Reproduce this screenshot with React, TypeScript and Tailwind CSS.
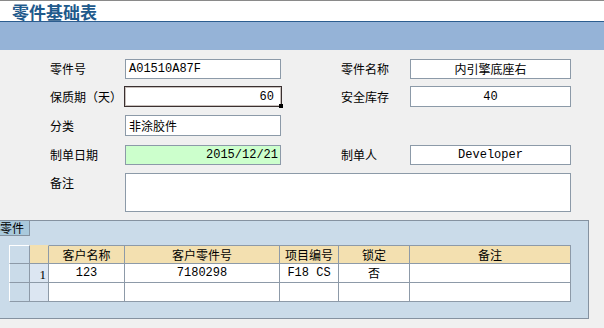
const cjk = "font-['Noto_Sans_CJK_SC','Noto_Sans',sans-serif]";
const mono = "font-['Liberation_Mono','Noto_Sans_CJK_SC',monospace]";

function Field({
  value,
  width,
  align = "left",
  mono: isMono = false,
  className = "",
}: {
  value: string;
  width: string;
  align?: "left" | "right" | "center";
  mono?: boolean;
  className?: string;
}) {
  const alignClass =
    align === "right" ? "justify-end pr-[7px]" : align === "center" ? "justify-center" : "justify-start pl-[3px]";
  return (
    <div
      className={`${width} h-full flex items-center border border-[#8c9aa8] bg-white text-[12px] text-black ${alignClass} ${
        isMono ? mono : cjk
      } ${className}`}
    >
      {value}
    </div>
  );
}

function Label({ text, width }: { text: string; width: string }) {
  return <div className={`${width} h-full flex items-center text-[12px] text-black ${cjk}`}>{text}</div>;
}

const cols = ["客户名称", "客户零件号", "项目编号", "锁定", "备注"];

export default function App() {
  return (
    <div className={`w-[604px] h-[328px] overflow-hidden bg-[#f0f0f0] flex flex-col ${cjk}`}>
      {/* title */}
      <div className="h-px bg-[#8a8a8a]" />
      <div className="h-[20px] bg-white pl-[12px] flex items-center">
        <span className="text-[17px] leading-[17px] font-bold text-[#1f5a8c]">零件基础表</span>
      </div>
      <div className="h-px bg-[#2c5d8f]" />
      <div className="h-[28px] bg-[#95b3d7]" />

      {/* form */}
      <div className="flex flex-col pl-[50px]">
        <div className="flex h-[20px] mt-[9px]">
          <Label text="零件号" width="w-[75px]" />
          <Field value="A01510A87F" width="w-[156px]" mono />
          <div className="w-[60px]" />
          <Label text="零件名称" width="w-[69px]" />
          <Field value="内引擎底座右" width="w-[161px]" align="center" />
        </div>
        <div className="flex h-[21px] mt-[7px]">
          <Label text="保质期（天）" width="w-[74px]" />
          <div className="relative w-[158px] h-full border border-[#3a3030] p-px bg-[#c8c0bc]">
            <div className={`w-full h-full bg-white flex items-center justify-end pr-[6px] text-[12px] ${mono}`}>60</div>
            <div className="absolute right-[-2px] bottom-[-2px] w-[4px] h-[4px] bg-black" />
          </div>
          <div className="w-[59px]" />
          <Label text="安全库存" width="w-[69px]" />
          <Field value="40" width="w-[161px]" align="center" mono />
        </div>
        <div className="flex h-[21px] mt-[8px]">
          <Label text="分类" width="w-[75px]" />
          <Field value="非涂胶件" width="w-[156px]" />
        </div>
        <div className="flex h-[20px] mt-[9px]">
          <Label text="制单日期" width="w-[75px]" />
          <Field value="2015/12/21" width="w-[156px]" align="right" mono className="!bg-[#ccffcc] !pr-[2px]" />
          <div className="w-[60px]" />
          <Label text="制单人" width="w-[69px]" />
          <Field value="Developer" width="w-[161px]" align="center" mono />
        </div>
        <div className="flex h-[39px] mt-[8px]">
          <div className="w-[75px] text-[12px] leading-[14px] pt-[3px]">备注</div>
          <div className="w-[446px] h-full border border-[#8c9aa8] bg-white" />
        </div>
      </div>

      {/* detail panel */}
      <div className="mt-[8px] w-[589px] h-[99px] bg-[#cadbe9] border-t border-r border-b border-[#8592a0] flex flex-col">
        <div className="flex">
          <div className="w-[30px] h-[16px] -mt-px bg-[#a9c9dc] border-t border-r border-b border-[#8592a0] text-[12px] leading-[14px] text-black">
            零件
          </div>
        </div>
        <div className="pl-[9px] pt-[9px]">
          <div className="grid grid-cols-[21px_19px_76px_155px_59px_71px_161px] grid-rows-[19px_19px_19px] w-[562px] text-[12px] text-black">
            {/* header */}
            <div className="border-t border-l border-white border-r border-r-[#8d9aa8] border-b border-b-[#8d9aa8]" />
            <div className="bg-[#f3e0b0] border-t border-t-[#f3e0b0] border-r border-b border-[#8d9aa8]" />
            {cols.map((c) => (
              <div
                key={c}
                className="bg-[#f3e0b0] border-t border-r border-b border-[#8d9aa8] flex items-center justify-center leading-none"
              >
                {c}
              </div>
            ))}
            {/* row 1 */}
            <div className="border-l border-l-white border-r border-b border-[#8d9aa8]" />
            <div className="bg-[#dce6f2] border-r border-b border-[#8d9aa8] flex items-end justify-end pr-[2px] text-[13px] leading-[15px] font-['Liberation_Serif',serif]">
              1
            </div>
            <div className={`bg-white border-r border-b border-[#8d9aa8] flex items-center justify-center ${mono}`}>123</div>
            <div className={`bg-white border-r border-b border-[#8d9aa8] flex items-center justify-center ${mono}`}>7180298</div>
            <div className={`bg-white border-r border-b border-[#8d9aa8] flex items-center justify-center ${mono}`}>F18 CS</div>
            <div className="bg-white border-r border-b border-[#8d9aa8] flex items-center justify-center">否</div>
            <div className="bg-white border-r border-b border-[#8d9aa8]" />
            {/* row 2 */}
            <div className="border-l border-l-white border-r border-b border-[#8d9aa8]" />
            <div className="bg-[#dce6f2] border-r border-b border-[#8d9aa8]" />
            <div className="bg-white border-r border-b border-[#8d9aa8]" />
            <div className="bg-white border-r border-b border-[#8d9aa8]" />
            <div className="bg-white border-r border-b border-[#8d9aa8]" />
            <div className="bg-white border-r border-b border-[#8d9aa8]" />
            <div className="bg-white border-r border-b border-[#8d9aa8]" />
          </div>
        </div>
      </div>
    </div>
  );
}
